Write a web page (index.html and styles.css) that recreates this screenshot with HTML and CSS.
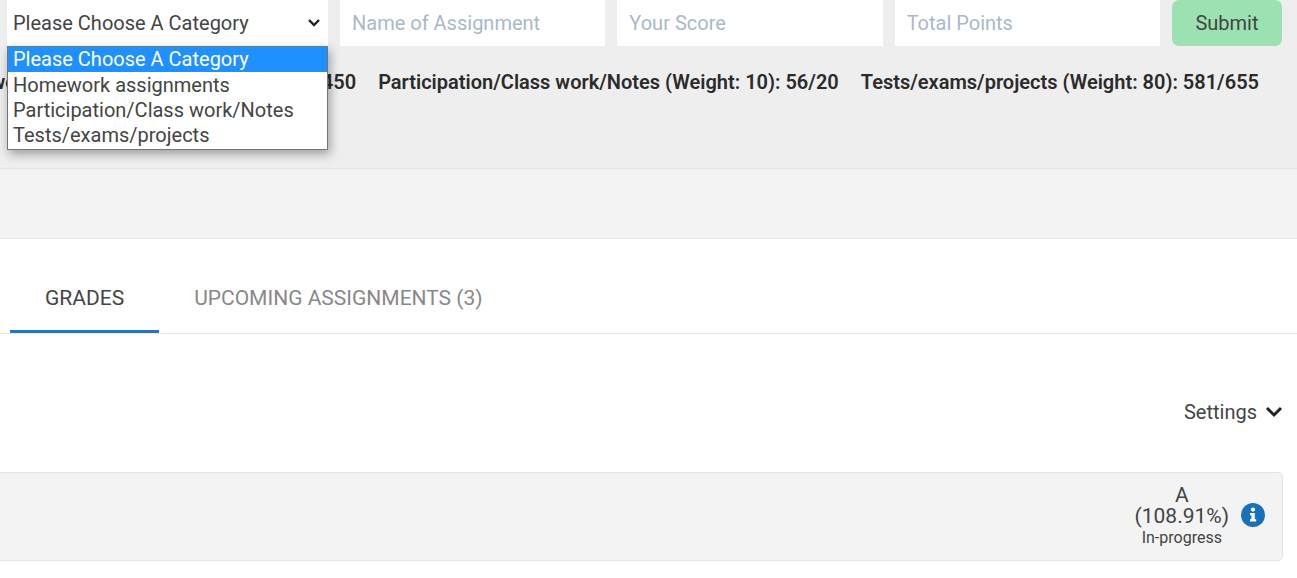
FILE: index.html
```html
<!DOCTYPE html>
<html lang="en">
<head>
<meta charset="utf-8">
<title>Grades</title>
<link rel="stylesheet" href="styles.css">
</head>
<body>
<section class="calculator">
  <form class="entry">
    <div class="category">
      <select class="field category-select" aria-label="Category">
        <option>Please Choose A Category</option>
        <option>Homework assignments</option>
        <option>Participation/Class work/Notes</option>
        <option>Tests/exams/projects</option>
      </select>
      <svg class="select-arrow" viewBox="0 0 14 10" aria-hidden="true"><path d="M2 2l5 5 5-5" fill="none" stroke="currentColor" stroke-width="2.4"/></svg>
      <ul class="menu" role="listbox" aria-label="Category options">
        <li class="menu-item selected" role="option" aria-selected="true">Please Choose A Category</li>
        <li class="menu-item" role="option">Homework assignments</li>
        <li class="menu-item" role="option">Participation/Class work/Notes</li>
        <li class="menu-item" role="option">Tests/exams/projects</li>
      </ul>
    </div>
    <input class="field" type="text" placeholder="Name of Assignment" aria-label="Name of Assignment">
    <input class="field" type="text" placeholder="Your Score" aria-label="Your Score">
    <input class="field" type="text" placeholder="Total Points" aria-label="Total Points">
    <button class="submit" type="button">Submit</button>
  </form>
  <div class="weights">
    <span>Homework assignments (Weight: 10): 430/450</span>
    <span>Participation/Class work/Notes (Weight: 10): 56/20</span>
    <span>Tests/exams/projects (Weight: 80): 581/655</span>
  </div>
</section>
<div class="strip"></div>
<nav class="tabs">
  <a class="tab active" href="#grades">GRADES</a>
  <a class="tab" href="#upcoming">UPCOMING ASSIGNMENTS (3)</a>
</nav>
<main class="content">
  <button class="settings" type="button">Settings
    <svg class="chevron" viewBox="0 0 18 12" aria-hidden="true"><path d="M2 2l7 7 7-7" fill="none" stroke="currentColor" stroke-width="3"/></svg>
  </button>
  <section class="summary">
    <div class="grade">
      <span>A</span>
      <span>(108.91%)</span>
      <span class="status">In-progress</span>
    </div>
    <button class="info" type="button" aria-label="Grade information">
      <svg class="info-icon" viewBox="0 0 24 24" aria-hidden="true"><circle cx="12" cy="12" r="12" fill="#1770b8"/><circle cx="12" cy="6.6" r="2.1" fill="#fff"/><path d="M9 10h4.8v6.2h1.4v2.3H9v-2.3h1.4v-3.9H9z" fill="#fff"/></svg>
    </button>
  </section>
</main>
</body>
</html>
```
FILE: styles.css
```css
* { box-sizing: border-box; }
body {
  margin: 0;
  background: #fff;
  color: #444;
  font: 20px/24px Roboto, sans-serif;
  overflow-x: hidden;
}
button, input, select { font: inherit; color: inherit; }
.calculator {
  background: #eee;
  border-bottom: 1px solid #e3e3e3;
  padding-bottom: 74px;
}
.entry {
  display: grid;
  grid-template-columns: 321px 1fr 1fr 1fr 110px;
  gap: 12px;
  padding: 0 15px 0 7px;
}
.category { position: relative; }
.field {
  display: block;
  width: 100%;
  min-width: 0;
  height: 46px;
  margin: 0;
  padding: 0 12px;
  border: 0;
  border-radius: 0;
  background: #fff;
}
.field::placeholder { color: #a9b8c9; opacity: 1; }
.category-select { padding: 0 6px; appearance: none; }
.select-arrow {
  position: absolute;
  top: 18px;
  right: 7px;
  width: 14px;
  height: 10px;
  color: #222;
  pointer-events: none;
}
.menu {
  position: absolute;
  z-index: 1;
  top: 46px;
  left: 0;
  width: 100%;
  margin: 0;
  padding: 0 0 1px;
  list-style: none;
  background: #fff;
  border: 1px solid #767676;
  box-shadow: 2px 4px 10px rgba(0, 0, 0, 0.35);
}
.menu-item {
  padding: 0 5px;
  line-height: 25px;
}
.menu-item.selected { margin-bottom: 1px; background: #1e90ff; color: #fff; }
.submit {
  height: 46px;
  padding: 0;
  border: 0;
  border-radius: 7px;
  background: #9be1b1;
}
.weights {
  display: flex;
  justify-content: flex-end;
  gap: 22px;
  padding: 24px 38px 0 0;
  overflow: hidden;
  color: #2b2b2b;
  font-weight: 600;
  white-space: nowrap;
}
.strip {
  height: 70px;
  background: #f3f3f3;
  border-bottom: 1px solid #e3e3e3;
}
.tabs {
  display: flex;
  padding: 22px 0 0 10px;
  border-bottom: 1px solid #e6e6e6;
}
.tab {
  padding: 25px 35px 20px;
  border-bottom: 3px solid transparent;
  color: #888;
  font-size: 21px;
  text-decoration: none;
}
.tab.active { border-color: #1f78c1; color: #444; }
.content {
  display: flex;
  flex-direction: column;
  padding: 66px 14px 16px 0;
}
.settings {
  display: flex;
  align-items: center;
  align-self: flex-end;
  gap: 8px;
  padding: 0;
  border: 0;
  background: none;
}
.chevron { width: 18px; height: 12px; color: #222; }
.summary {
  display: flex;
  align-items: center;
  justify-content: flex-end;
  gap: 12px;
  margin-top: 48px;
  padding: 12px 17px 12px 0;
  background: #f3f3f3;
  border: 1px solid #e3e3e3;
  border-left: 0;
  border-radius: 0 5px 5px 0;
}
.grade {
  display: flex;
  flex-direction: column;
  align-items: center;
  font-size: 21px;
  line-height: 21px;
}
.status { font-size: 16px; }
.info {
  display: flex;
  margin-top: -4px;
  padding: 0;
  border: 0;
  background: none;
}
.info-icon { width: 24px; height: 24px; }
```
